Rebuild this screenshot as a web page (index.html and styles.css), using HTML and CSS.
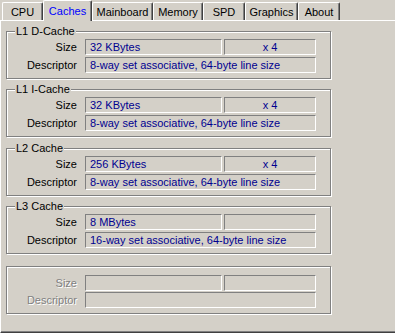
FILE: index.html
```html
<!DOCTYPE html>
<html>
<head>
<meta charset="utf-8">
<link rel="stylesheet" href="styles.css">
</head>
<body>
<div class="window">
  <div class="tabs">
    <div class="tab">CPU</div>
    <div class="tab active">Caches</div>
    <div class="tab">Mainboard</div>
    <div class="tab">Memory</div>
    <div class="tab">SPD</div>
    <div class="tab">Graphics</div>
    <div class="tab">About</div>
  </div>
  <div class="panel">
    <div class="group">
      <div class="legend">L1 D-Cache</div>
      <div class="row"><span class="lbl">Size</span><span class="field f1">32 KBytes</span><span class="field f2">x 4</span></div>
      <div class="row"><span class="lbl">Descriptor</span><span class="field wide">8-way set associative, 64-byte line size</span></div>
    </div>
    <div class="group">
      <div class="legend">L1 I-Cache</div>
      <div class="row"><span class="lbl">Size</span><span class="field f1">32 KBytes</span><span class="field f2">x 4</span></div>
      <div class="row"><span class="lbl">Descriptor</span><span class="field wide">8-way set associative, 64-byte line size</span></div>
    </div>
    <div class="group">
      <div class="legend">L2 Cache</div>
      <div class="row"><span class="lbl">Size</span><span class="field f1">256 KBytes</span><span class="field f2">x 4</span></div>
      <div class="row"><span class="lbl">Descriptor</span><span class="field wide">8-way set associative, 64-byte line size</span></div>
    </div>
    <div class="group">
      <div class="legend">L3 Cache</div>
      <div class="row"><span class="lbl">Size</span><span class="field f1">8 MBytes</span><span class="field f2"></span></div>
      <div class="row"><span class="lbl">Descriptor</span><span class="field wide">16-way set associative, 64-byte line size</span></div>
    </div>
    <div class="group empty">
      <div class="row"><span class="lbl">Size</span><span class="field f1"></span><span class="field f2"></span></div>
      <div class="row"><span class="lbl">Descriptor</span><span class="field wide"></span></div>
    </div>
  </div>
</div>
</body>
</html>
```

FILE: styles.css
```css
html, body {
  margin: 0;
  padding: 0;
}
body {
  background: #d4d0c8;
  font: 11px "Liberation Sans", Arial, sans-serif;
  color: #000;
  width: 395px;
  height: 333px;
  overflow: hidden;
}
.window {
  width: 395px;
  height: 333px;
  overflow: hidden;
}
.tabs {
  display: flex;
  align-items: flex-end;
  height: 20px;
  padding-left: 2px;
  position: relative;
  z-index: 1;
}
.tab {
  box-sizing: border-box;
  height: 18px;
  border-top: 1px solid #fff;
  border-left: 1px solid #fff;
  border-right: 1px solid #404040;
  box-shadow: inset -1px 0 0 #808080;
  border-radius: 2px 2px 0 0;
  padding-top: 3px;
  line-height: 13px;
  text-align: center;
  background: #d4d0c8;
  white-space: nowrap;
}
.tab:nth-child(1) { width: 41px; }
.tab:nth-child(2) { width: 49px; }
.tab:nth-child(3) { width: 61px; }
.tab:nth-child(4) { width: 50px; }
.tab:nth-child(5) { width: 42px; }
.tab:nth-child(6) { width: 53px; }
.tab:nth-child(7) { width: 42px; }
.tab.active {
  height: 21px;
  margin-bottom: -1px;
  padding-top: 4px;
  color: #0000ff;
}
.panel {
  box-sizing: border-box;
  width: 420px;
  height: 313px;
  border-top: 1px solid #fff;
  border-left: 1px solid #fff;
  border-bottom: 1px solid #404040;
  box-shadow: inset 0 -1px 0 #808080;
  padding: 10px 0 0 5px;
}
.group {
  box-sizing: border-box;
  width: 325px;
  height: 48px;
  border: 1px solid #808080;
  box-shadow: inset 1px 1px 0 #fff, 1px 1px 0 #fff;
  margin-bottom: 10px;
  padding-top: 0;
}
.group:nth-child(2) { margin-bottom: 11px; }
.group:nth-child(4) { margin-bottom: 12px; }
.legend {
  display: table;
  margin: -7px 0 1px 8px;
  padding: 0 1px;
  height: 13px;
  line-height: 13px;
  background: #d4d0c8;
  color: #000;
}
.group.empty {
  padding-top: 8px;
}
.row {
  display: flex;
  height: 16px;
  margin-bottom: 2px;
}
.group.empty .row {
  margin-bottom: 1px;
}
.lbl {
  width: 70px;
  margin-right: 8px;
  text-align: right;
  line-height: 16px;
}
.group.empty .lbl {
  color: #808080;
  text-shadow: 1px 1px 0 #fff;
}
.field {
  box-sizing: border-box;
  height: 16px;
  border-top: 1px solid #808080;
  border-left: 1px solid #808080;
  border-bottom: 1px solid #fff;
  border-right: 1px solid #fff;
  line-height: 14px;
  padding-left: 4px;
  color: #000090;
  white-space: nowrap;
  overflow: hidden;
}
.f1 { width: 137px; margin-right: 2px; }
.f2 { width: 92px; text-align: center; padding-left: 0; }
.wide { width: 231px; }
```
